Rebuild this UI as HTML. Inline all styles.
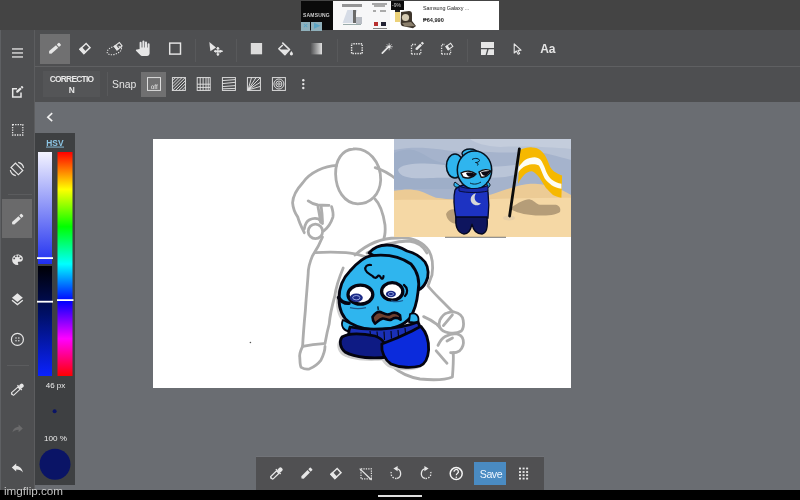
<!DOCTYPE html>
<html><head><meta charset="utf-8">
<style>
*{margin:0;padding:0;box-sizing:border-box}
html,body{width:800px;height:500px;overflow:hidden;background:#6a6d72;font-family:"Liberation Sans",sans-serif}
.a{position:absolute;will-change:transform}
svg{will-change:transform}
#top{left:0;top:0;width:800px;height:30px;background:#444}
#tb1{left:35px;top:30px;width:765px;height:36px;background:#4e4f51}
#tbline{left:35px;top:66px;width:765px;height:1px;background:#5f6062}
#tb2{left:35px;top:67px;width:765px;height:34.5px;background:#4e4f51}
#side{left:0;top:30px;width:34px;height:460px;background:#4e4f51}
#sideb{left:34px;top:30px;width:1px;height:460px;background:#5c5d5f}
#blk{left:0;top:490px;width:800px;height:10px;background:#000}
.sep{position:absolute;width:1px;background:#58595b}
.hl{position:absolute;background:#707071}
svg{position:absolute;overflow:visible}
.w{fill:#e6e6e6}
.ws{fill:none;stroke:#e6e6e6}
</style></head><body>
<div class="a" id="top"></div>
<div class="a" id="tb1"></div>
<div class="a" id="tbline"></div>
<div class="a" id="tb2"></div>
<div class="a" id="side"></div>
<div class="a" id="sideb"></div>
<div class="a" style="left:0;top:30px;width:1px;height:460px;background:#5e6063"></div>

<!-- ad -->
<div class="a" style="left:301px;top:1px;width:32px;height:29px;background:#0a0a0a"></div>
<div class="a" style="left:303px;top:12px;width:28px;font:bold 5px 'Liberation Sans';color:#ccc;letter-spacing:0.2px">SAMSUNG</div>
<div class="a" style="left:301px;top:21.5px;width:9px;height:8.5px;background:#8fb0bb;color:#5aa5c5;font:bold 8px/8.5px 'Liberation Sans';text-align:center">&#215;</div>
<div class="a" style="left:311px;top:21.5px;width:11px;height:8.5px;background:#8fb0bb"></div><svg width="800" height="40" style="left:0;top:0"><path d="M314,22.8 L320.5,25.8 L314,28.8Z" fill="#5aa5c5"/></svg>
<div class="a" style="left:333px;top:1px;width:166px;height:29px;background:#fff"></div>
<div class="a" style="left:333px;top:1px;width:57px;height:29px;background:#f7f7f8"></div>
<div class="a" style="left:341.5px;top:4.4px;width:20px;height:2.6px;background:#444;opacity:0.55"></div>
<div class="a" style="left:345px;top:10px;width:10px;height:13px;background:#d5dbe6;transform:skewX(-20deg)"></div>
<div class="a" style="left:352.5px;top:10px;width:3px;height:13px;background:#6a6a6a"></div>
<div class="a" style="left:356px;top:17px;width:6px;height:7px;background:#b8bcc4"></div>
<div class="a" style="left:343px;top:24px;width:18px;height:1.2px;background:#9aa"></div>
<div class="a" style="left:372px;top:2.5px;width:15px;height:1.6px;background:#555;opacity:0.5"></div>
<div class="a" style="left:374px;top:5px;width:11px;height:1.5px;background:#777;opacity:0.6"></div>
<div class="a" style="left:373px;top:10px;width:3px;height:2px;background:#777;opacity:0.6"></div>
<div class="a" style="left:380px;top:10px;width:6px;height:2px;background:#777;opacity:0.6"></div>
<div class="a" style="left:373.7px;top:21.9px;width:4.3px;height:3.5px;background:#b83030"></div>
<div class="a" style="left:380.7px;top:21.9px;width:5px;height:3.5px;background:#223"></div>
<div class="a" style="left:373px;top:28px;width:14px;height:1px;background:#333;opacity:0.6"></div>
<div class="a" style="left:391px;top:1px;width:13px;height:9.3px;background:#0c0c0c"></div>
<div class="a" style="left:392.3px;top:2.2px;font:5px 'Liberation Sans';color:#ccc">-9%</div>
<div class="a" style="left:395.3px;top:10.3px;width:5.1px;height:12px;background:#ecd27a"></div>
<div class="a" style="left:395.3px;top:10.3px;width:5.1px;height:2.4px;background:#222"></div>
<svg width="800" height="40" style="left:0;top:0">
 <path d="M401,12 L409,11 C411,11 412,12 412,14 L412,21 L416,26 L413,28.2 L402,26 C401,25 400.7,24 400.7,23 Z" fill="#3d352b"/>
 <circle cx="405.5" cy="17.5" r="3.6" fill="#d6ccb4"/>
 <path d="M402,23 L411,22 L415,26 L405,26.5Z" fill="#8a7f6c"/>
</svg>
<div class="a" style="left:423.3px;top:4.8px;font:5.4px 'Liberation Sans';color:#222;white-space:nowrap;letter-spacing:-0.05px">Samsung Galaxy ...</div>
<div class="a" style="left:423.3px;top:17.4px;font:bold 5.6px 'Liberation Sans';color:#1a1a1a;white-space:nowrap;letter-spacing:0px">&#8369;64,990</div>

<!-- toolbar 1 -->
<div class="hl" style="left:40px;top:34px;width:30px;height:30px"></div>
<div class="sep" style="left:195px;top:39px;height:23px"></div>
<div class="sep" style="left:236px;top:39px;height:23px"></div>
<div class="sep" style="left:337px;top:39px;height:23px"></div>
<div class="sep" style="left:467px;top:39px;height:23px"></div>

<!-- toolbar 2 -->
<div class="a" style="left:43px;top:71.2px;width:57px;height:26.4px;background:#545557"></div>
<div class="a" style="left:42.6px;top:73.6px;width:57px;text-align:center;font:bold 8.4px/11px 'Liberation Sans';letter-spacing:-0.75px;color:#e8e8e8">CORRECTIO<br>N</div>
<div class="sep" style="left:107px;top:72px;height:24px"></div>
<div class="a" style="left:112.4px;top:79px;font:10.4px 'Liberation Sans';color:#e4e4e4">Snap</div>
<div class="hl" style="left:141px;top:72px;width:25px;height:25px"></div>
<div class="hl" style="left:2px;top:199px;width:30px;height:39px;background:#6a6a6b"></div>
<div class="sep" style="left:8px;top:194px;height:1px;width:24px;background:#5b5c5e"></div>
<div class="sep" style="left:7px;top:365px;height:1px;width:22px;background:#5b5c5e"></div>

<!-- color panel -->
<div class="a" style="left:35px;top:133px;width:40px;height:352px;background:#3e4042"></div>

<!-- canvas -->
<div class="a" style="left:153px;top:139px;width:418px;height:249px;background:#fff"></div>

<!-- bottom toolbar -->
<div class="a" style="left:256px;top:455.8px;width:288px;height:1.5px;background:#717378"></div>
<div class="a" style="left:256px;top:457.3px;width:288px;height:32.7px;background:#505052"></div>
<div class="a" style="left:474px;top:462px;width:32.2px;height:22.7px;background:#4a8bc2"></div>
<div class="a" style="left:474.5px;top:468px;width:32px;text-align:center;font:10.6px 'Liberation Sans';letter-spacing:-0.45px;color:#eef6ff">Save</div>


<svg width="800" height="500" style="left:0;top:0;z-index:5" viewBox="0 0 800 500">
<defs>
 <g id="pen"><path d="M-7.3,0 L-5.8,-1.7 H3.3 V1.7 H-5.8Z"/><rect x="4.3" y="-1.7" width="3" height="3.4" rx="0.7"/></g>
 <g id="eras"><rect x="-4.2" y="-2.85" width="8.4" height="5.7" fill="none" stroke="#e6e6e6" stroke-width="1.5"/><rect x="-4.95" y="-3.6" width="3.6" height="7.2"/></g>
</defs>
<g fill="#e6e6e6">
 <!-- toolbar1 -->
 <use href="#pen" transform="translate(54.6,48.6) rotate(-41)"/>
 <use href="#eras" transform="translate(85,48.4) rotate(-43)"/>
 <g transform="translate(118.2,46.2) rotate(-38) scale(0.76)"><use href="#eras"/></g>
 <ellipse cx="114.3" cy="50.4" rx="7.4" ry="3.9" transform="rotate(-18 114.3 50.4)" fill="none" stroke="#e6e6e6" stroke-width="1.1" stroke-dasharray="1.2 1.3"/>
 <!-- hand -->
 <path d="M139.6,49 V42.8 a1,1 0 0 1 2,0 V47.5 H142.4 V41.6 a1,1 0 0 1 2,0 V47.5 H145 V42.4 a1,1 0 0 1 2,0 V47.5 H147.6 V44.3 a1,1 0 0 1 2,0 V53.5 a2.4,2.4 0 0 1 -2.4,2.4 H142 a2,2 0 0 1 -1.5,-0.7 L136,50.8 a0.9,0.9 0 0 1 1.1,-1.3 Z"/>
 <rect x="169.7" y="43.1" width="10.8" height="11" fill="none" stroke="#e6e6e6" stroke-width="1.45"/>
 <!-- move -->
 <path d="M209.3,42 L216,47.6 L210.4,51.2 Z"/>
 <path d="M217.9,47.3 V55.5 M214.2,51.3 H222.6" stroke="#e6e6e6" stroke-width="1.4" fill="none"/>
 <path d="M216,48.9 L217.9,46.8 L219.8,48.9 Z M216,53.7 L217.9,55.9 L219.8,53.7 Z M216.3,49.4 L214,51.3 L216.3,53.2 Z M219.5,49.4 L222.8,51.3 L219.5,53.2 Z"/>
 <rect x="250.8" y="43" width="11.3" height="11.3" fill="#dcdcdc"/>
 <!-- bucket -->
 <path d="M282.3,42.6 L289.6,49.6 L284.9,54.8 L278.8,48.8 L282.8,45" fill="none" stroke="#e6e6e6" stroke-width="1.5" stroke-linejoin="round"/>
 <path d="M279.4,49.6 H289 L284.9,54.4 Z"/>
 <path d="M291.4,51 q1.6,2 1.6,2.8 a1.6,1.6 0 0 1 -3.2,0 q0,-0.8 1.6,-2.8z"/>
 <defs><linearGradient id="gr" x1="0" x2="1"><stop offset="0" stop-color="#4e4f51"/><stop offset="1" stop-color="#e0e0e0"/></linearGradient></defs>
 <rect x="310.4" y="43" width="11.6" height="11.4" fill="url(#gr)"/>
 <!-- dotted square -->
 <rect x="351.6" y="43.75" width="10.6" height="9.8" fill="none" stroke="#e6e6e6" stroke-width="1.45" stroke-dasharray="1.4 1.05" stroke-dashoffset="0.7"/>
 <!-- wand -->
 <path d="M382.3,53.2 L388.2,47.2" stroke="#e6e6e6" stroke-width="1.7" stroke-linecap="round"/>
 <path d="M389.2,43.2 V50.3 M385.7,46.75 H392.8 M386.8,44.3 L391.6,49.2 M391.6,44.3 L386.8,49.2" stroke="#e6e6e6" stroke-width="0.7"/><circle cx="389.2" cy="46.75" r="1.2" fill="#f0f0f0"/>
 <!-- select pen -->
 <path d="M411.5,54 H420.8 V48.5 M411.5,54 V44.5 H416" fill="none" stroke="#e6e6e6" stroke-width="1.3" stroke-dasharray="1.3 1.2"/>
 <use href="#pen" transform="translate(419.4,46.2) rotate(-44) scale(0.72,0.75)"/>
 <!-- select eraser -->
 <path d="M441.6,54 H450.6 V49.8 M441.6,54 V44.5 H445" fill="none" stroke="#e6e6e6" stroke-width="1.3" stroke-dasharray="1.3 1.2"/>
 <use href="#eras" transform="translate(449.4,46.5) rotate(-35) scale(0.68)"/>
 <!-- panel -->
 <rect x="481" y="42" width="13" height="6" />
 <path d="M481,49.2 H487.2 L485.6,55 H481 Z M488.6,49.2 H494 V55 H487 Z"/>
 <!-- cursor -->
 <path d="M514.2,43.8 L514.2,53 L516.4,51 L518.2,54.2 L519.6,53.4 L518,50.4 L521,50.2 Z" fill="none" stroke="#e6e6e6" stroke-width="1.1" stroke-linejoin="round"/>
</g>

<g fill="none" stroke="#e2e2e2" stroke-width="0.95">
 <rect x="147.5" y="77.6" width="13" height="12.8"/>
 <rect x="172.4" y="77.6" width="13" height="12.8"/>
 <path d="M172.4,80.8 L175.6,77.6 M172.4,84 L178.8,77.6 M172.4,87.2 L182,77.6 M172.4,90.4 L185.2,77.6 M175.6,90.4 L185.4,80.6 M178.8,90.4 L185.4,83.8 M182,90.4 L185.4,87"/>
 <rect x="197.2" y="77.6" width="13" height="12.8"/>
 <path d="M200.2,77.6 V90.4 M203.1,77.6 V90.4 M206,77.6 V90.4 M208.2,77.6 V90.4 M197.2,84.2 H210.2 M197.2,87.4 H210.2"/>
 <rect x="222.4" y="77.6" width="13" height="12.8"/>
 <path d="M222.4,80.6 L235.4,79.6 M222.4,83.6 L235.4,82.3 M222.4,86.6 L235.4,85.6 M222.4,88.8 L235.4,88.4"/>
 <rect x="247.4" y="77.6" width="13" height="12.8"/>
 <path d="M248,90 L260,78 M248,90 L256,77.6 M248,90 L251.5,77.6 M248,90 L260,82.5 M248,90 L260,86.5"/>
 <rect x="272.4" y="77.6" width="13" height="12.8"/>
 <circle cx="278.9" cy="84" r="5"/><circle cx="278.9" cy="84" r="3"/><circle cx="278.9" cy="84" r="1.2"/>
</g>
<text x="154.3" y="89.2" font-family="Liberation Sans" font-size="6.4" fill="#eeeeee" text-anchor="middle" style="text-rendering:geometricPrecision">off</text>
<g fill="#e6e6e6"><circle cx="303.3" cy="80.3" r="1.2"/><circle cx="303.3" cy="84.1" r="1.2"/><circle cx="303.3" cy="88" r="1.2"/></g>

<g fill="#e6e6e6">
 <rect x="12" y="48.3" width="11" height="1.3"/><rect x="12" y="52.3" width="11" height="1.3"/><rect x="12" y="56.3" width="11" height="1.3"/>
 <path d="M17,88.7 H12.7 V97 H21 V92.5" fill="none" stroke="#e6e6e6" stroke-width="1.5"/>
 <use href="#pen" transform="translate(19.5,89.6) rotate(-43) scale(0.6,0.7)"/>
 <rect x="12.6" y="124.6" width="10.2" height="10.4" fill="none" stroke="#e6e6e6" stroke-width="1.3" stroke-dasharray="1.4 1.1"/>
 <g transform="translate(16.9,168.9) rotate(45)"><rect x="-5.2" y="-3.1" width="10.4" height="6.2" fill="none" stroke="#e6e6e6" stroke-width="1.2"/></g>
 <path d="M18.2,162.3 A6.9,6.9 0 0 1 23.6,167.8 M15.8,175.6 A6.9,6.9 0 0 1 10.3,170.2" fill="none" stroke="#e6e6e6" stroke-width="1.2"/>
 <use href="#pen" transform="translate(17.3,219.5) rotate(-42) scale(0.95,1)"/>
 <path d="M17.4,254.5 a5.3,5.3 0 0 0 0,10.6 c0.6,0 1,-0.4 1,-1 0,-0.3 -0.1,-0.5 -0.3,-0.7 -0.2,-0.2 -0.3,-0.4 -0.3,-0.7 0,-0.5 0.4,-1 1,-1 h1.1 c1.6,0 3,-1.3 3,-3 0,-2.4 -2.4,-4.2 -5.5,-4.2z"/>
 <g fill="#4e4f51"><circle cx="14.2" cy="258.4" r="0.95"/><circle cx="15.9" cy="256.2" r="0.95"/><circle cx="18.6" cy="256.2" r="0.95"/><circle cx="20.6" cy="258.4" r="0.95"/></g>
 <path d="M17.4,293.2 L22.8,297.7 L17.4,302 L12,297.7 Z"/>
 <path d="M12,300.3 L17.4,304.6 L22.8,300.3" fill="none" stroke="#e6e6e6" stroke-width="1.3"/>
 <circle cx="17.4" cy="339.4" r="6" fill="none" stroke="#e6e6e6" stroke-width="1.2"/>
 <circle cx="16" cy="338" r="0.75"/><circle cx="18.8" cy="338" r="0.75"/><circle cx="16" cy="340.8" r="0.75"/><circle cx="18.8" cy="340.8" r="0.75"/>
 <g transform="translate(17.5,389.5) rotate(-42)">
  <rect x="-7" y="-1.6" width="9" height="3.2" rx="0.5" fill="none" stroke="#e6e6e6" stroke-width="1.1"/>
  <path d="M-7,-1.6 L-8.2,0 L-7,1.6Z"/>
  <rect x="2.2" y="-3.2" width="1.3" height="6.4"/>
  <rect x="3.2" y="-2" width="4.4" height="4" rx="1.6"/>
 </g>
 <path d="M22.8,428.4 L18.6,424.6 V426.8 C14.6,427.3 13,429.8 12.4,432.4 C13.8,430.6 15.6,429.8 18.6,429.8 V432.2Z" fill="#6b6b6c"/>
 <path d="M11.8,467.4 L16.2,463.4 V465.7 C20.2,466.2 22.2,469 23,472.6 C21.6,470.6 19.6,469.5 16.2,469.5 V471.5Z"/>
</g>

<defs>
 <linearGradient id="sv" x1="0" y1="0" x2="0" y2="1"><stop offset="0" stop-color="#f4f4ff"/><stop offset="1" stop-color="#1f2ff0"/></linearGradient>
 <linearGradient id="vv" x1="0" y1="0" x2="0" y2="1"><stop offset="0" stop-color="#000005"/><stop offset="0.45" stop-color="#00106a"/><stop offset="1" stop-color="#0a22ff"/></linearGradient>
 <linearGradient id="hue" x1="0" y1="0" x2="0" y2="1">
  <stop offset="0" stop-color="#ff0000"/><stop offset="0.1667" stop-color="#ffff00"/><stop offset="0.3333" stop-color="#00ff00"/><stop offset="0.5" stop-color="#00ffff"/><stop offset="0.6667" stop-color="#0000ff"/><stop offset="0.8333" stop-color="#ff00ff"/><stop offset="1" stop-color="#ff0000"/>
 </linearGradient>
</defs>
<rect x="38" y="152" width="14" height="112" fill="url(#sv)"/>
<rect x="38" y="266" width="14" height="110" fill="url(#vv)"/>
<rect x="57.5" y="152" width="15" height="224" fill="url(#hue)"/>
<rect x="37" y="257.2" width="16" height="1.8" fill="#fff"/>
<rect x="37" y="300.8" width="16" height="1.8" fill="#fff"/>
<rect x="57" y="299.2" width="16.5" height="1.8" fill="#fff"/>
<circle cx="54.6" cy="411.3" r="2" fill="#0a1466"/>
<circle cx="55" cy="464.3" r="15.5" fill="#0a1466"/>
<text x="46.3" y="145.6" font-family="Liberation Sans" font-weight="bold" font-size="8.8" fill="#8cc6e6" textLength="17.2" lengthAdjust="spacingAndGlyphs">HSV</text>
<rect x="46" y="146.6" width="18" height="0.9" fill="#8cc6e6"/>
<text x="55.5" y="388.4" font-family="Liberation Sans" font-size="8" fill="#ececec" text-anchor="middle">46 px</text>
<text x="55.5" y="441.4" font-family="Liberation Sans" font-size="8.1" fill="#ececec" text-anchor="middle">100 %</text>
<path d="M52.2,113.2 L47.8,117.2 L52.2,121.2" fill="none" stroke="#f0f0f0" stroke-width="1.6"/>

<g fill="#e6e6e6">
 <g transform="translate(276.3,473.5) rotate(-44)">
  <rect x="-6.6" y="-1.7" width="8.6" height="3.4" rx="0.6" fill="none" stroke="#e6e6e6" stroke-width="1.2"/>
  <path d="M-6.6,-1.7 L-8,0 L-6.6,1.7Z"/>
  <rect x="2" y="-3.4" width="1.4" height="6.8"/>
  <rect x="3.2" y="-2.1" width="4.6" height="4.2" rx="1.6"/>
 </g>
 <use href="#pen" transform="translate(306.5,473.5) rotate(-45) scale(0.97,1)"/>
 <use href="#eras" transform="translate(336,473.5) rotate(-43)"/>
 <rect x="361" y="468.8" width="10.4" height="10" fill="none" stroke="#e6e6e6" stroke-width="1.2" stroke-dasharray="1.3 1.1"/>
 <path d="M359.7,468.6 L371.6,480" stroke="#e6e6e6" stroke-width="1.3"/>
 <path d="M396,468.6 A5,5 0 0 1 397,478.4" fill="none" stroke="#e6e6e6" stroke-width="1.3"/><path d="M396.5,478.5 A5,5 0 0 1 391.3,472" fill="none" stroke="#e6e6e6" stroke-width="1.3" stroke-dasharray="1.5 1.3"/>
 <path d="M397.6,466 L393.4,468.6 L397.6,471.2Z"/>
 <path d="M426,468.6 A5,5 0 0 0 425,478.4" fill="none" stroke="#e6e6e6" stroke-width="1.3"/><path d="M425.5,478.5 A5,5 0 0 0 430.7,472" fill="none" stroke="#e6e6e6" stroke-width="1.3" stroke-dasharray="1.5 1.3"/>
 <path d="M424.4,466 L428.6,468.6 L424.4,471.2Z"/>
 <circle cx="456.2" cy="473.6" r="6" fill="none" stroke="#f4f4f4" stroke-width="1.5"/>
 <path d="M454,471.8 a2.2,2.2 0 1 1 3.4,1.7 c-0.8,0.5 -1.1,0.9 -1.1,1.8" fill="none" stroke="#f4f4f4" stroke-width="1.3"/>
 <circle cx="456.3" cy="477.3" r="0.8" fill="#f4f4f4"/>
</g>
<g fill="#e8e8e8">
 <rect x="519" y="467.6" width="2" height="1.8"/><rect x="522.6" y="467.6" width="2" height="1.8"/><rect x="526.1" y="467.6" width="2" height="1.8"/>
 <rect x="519" y="471.1" width="2" height="1.8"/><rect x="522.6" y="471.1" width="2" height="1.8"/><rect x="526.1" y="471.1" width="2" height="1.8"/>
 <rect x="519" y="474.3" width="2" height="1.8"/><rect x="522.6" y="474.3" width="2" height="1.8"/><rect x="526.1" y="474.3" width="2" height="1.8"/>
 <rect x="519" y="477.7" width="2" height="1.8"/><rect x="522.6" y="477.7" width="2" height="1.8"/><rect x="526.1" y="477.7" width="2" height="1.8"/>
</g>
<text x="540.2" y="53.1" font-family="Liberation Sans" font-weight="bold" font-size="12" fill="#e6e6e6">Aa</text>
</svg>


<svg width="800" height="500" style="left:0;top:0;z-index:3" viewBox="0 0 800 500">
<defs><clipPath id="cv"><rect x="153" y="139" width="418" height="249"/></clipPath></defs>
<g clip-path="url(#cv)">
<!-- gray sketch -->
<g fill="none" stroke="#adadad" stroke-width="2.8" stroke-linecap="round" stroke-linejoin="round">
 <path d="M353,149 C368,147 381,162 380.7,180 C380,195 370,204 357.6,203.9 C344,203 336,190 335.6,174 C335.5,160 342,150 353,149 Z"/>
 <path d="M336.7,165.4 C325,166 310,172 302.6,183 C297,189 293,195 292.6,202.8 C293,208 295,213 297.8,217.1 C299,222 301,226 304.3,232.7"/>
 <path d="M375.2,167.6 C383,170 390,174 396,179"/>
 <path d="M375,199 C380,204 383,212 385,225 C385.5,231 385,235 384,238"/>
 <circle cx="315.4" cy="231.4" r="7.2"/>
 <path d="M308.2,200.9 C311,203 314,204.5 318,205 C322,205.4 326,205.4 329,205.4"/>
 <path d="M318,206.7 C319,212 320,217 320.6,222.3 M321.2,206.7 C322,212 322.3,217 322.5,222"/>
 <path d="M331.6,206.7 C333,211 333.5,214 332.9,217.1 C331,223 329,227 323.8,230.8"/>
 <path d="M304.3,228.8 C305,224 307,221 309.5,219.7 C313,218 316,218 318.6,219 C320,220 321,222 322.5,223.6"/>
 <path d="M322.5,237 C319,246 315,252 312.4,256 C309,264 308.2,270 308.2,273.6 C307,290 306,300 305.4,310 C304,325 303,338 302.6,346.4 C301,350 299,353 299.8,357.6 C300,362 300,366 301.2,367.4 C304,369 307,369.5 309.6,368.8 C314,367 318,364 320.8,360.4 C323,356 325,350 325,346.4"/>
 <path d="M302.6,346.4 C309,345 316,344 323.6,343.6"/>
 <path d="M315.2,252.6 C325,252 336,252 346,252.6 C353,253 360,255 365.6,256.8"/>
 <path d="M343.2,268 C339,278 336,287 334.8,296 C332,306 330,315 329.2,324 C327,332 326,338 325,343.6"/>
 <path d="M355,255 C365,246 380,238 397,238 C410,237 422,240 429,251 C433,258 433,268 432,275 C430,280 429,283 428,286 C432,291 436,295 440,299 C445,304 449,308 452.4,311.5"/>
 <path d="M367,253 C380,246 395,241 409,241 C418,242 424,247 427,253"/>
 <path d="M439.8,320.2 C442,316 444.5,313.5 447,313 C450,312 452,311.8 454.2,312 C459,313 462.5,316 463.2,320.2 C464,325 463,329 461.4,331 C458,333 453,333.5 448.8,332.8 C444,332 441,330 439.8,327.4 C439,325 439,322 439.8,320.2Z"/>
 <path d="M443.4,325.6 L452.4,314.8"/>
 <path d="M438,345.4 C440,341 442,338 445.2,336.4 C449,334.5 452.5,333.7 456,333.7 C460,334.5 462.5,337 463.2,340 C464,344 462,348.5 459.6,350.8 C457,352.5 453.5,353 450.6,352.6"/>
 <path d="M447,341 L452.5,338"/>
 <path d="M436.2,350.8 C439,354 443,359 447,363.3"/>
 <path d="M393,366.6 C400,373 411,377.4 420,379 C430,380 445,380 452.4,377 C453,370 453.5,360 453.3,352.6"/>
 <path d="M423.6,316.6 C428,318.5 432,320.5 436.2,323.8 C437.5,325 438.8,326 439.8,327.4"/>
</g>
<circle cx="250.4" cy="342.5" r="0.8" fill="#555"/>

<!-- inset -->
<g>
 <rect x="394" y="139" width="177" height="98" fill="#a5b3cc"/>
 <path d="M394,139 H571 V160 C555,156 540,150 520,152 C500,154 480,150 460,152 C440,150 420,145 394,150Z" fill="#b7c2d5"/>
 <path d="M470,139 H571 V149 C550,147 520,146 500,147 C485,146 475,143 470,139Z" fill="#c4cddc"/>
 <path d="M394,153 C400,150 405,149.5 410,149.5 C416,150 422,153 428,157 C436,162 446,164 460,166 L460,189 L394,189Z" fill="#9eaec8"/>
 <path d="M398,170 C400,165 410,163.5 425,163.5 C440,164 455,167 470,166 C480,166 500,168 520,164 C525,170 520,175 505,177 C480,179 450,177 430,178 C412,179 400,178 398,170Z" fill="#bac5d8"/>
 <path d="M394,190.8 C400,190 404,189.4 408,189.4 C412,189.4 416,190 419,190.8 C426,193 431,196 436,197.8 C445,199 455,200 470,199 C485,198 500,191 511,188 C520,185 528,183.8 532,183.8 C540,184 548,185 553,186.6 C560,189 566,192 571,195 L571,237 L394,237Z" fill="#eccb95"/>
 <path d="M394,200 C420,199.5 450,200.5 480,199.5 C510,198.5 540,197.5 571,197.8 L571,237 L394,237Z" fill="#f5d8a5"/>
 <path d="M512,207 C518,203 524,199.2 529.2,199.2 C534,200 536,204 540,204.8 C546,205 551,204.5 556,204.8 C560,206 561,209 560,212 C556,215 548,215.5 540,215.5 C528,215.5 518,213 512,210Z" fill="#b59d78"/>
 <ellipse cx="509" cy="218" rx="6" ry="2.5" fill="#e7cfa7"/>
 <!-- flag -->
 <path d="M520,150.2 C524,148 528,147.2 532,147.4 C536,147.6 538.5,148.6 540.4,150.2 C543,152.5 545,155 546,157.2 C548,161 549,164 550.2,167 C552,170 554,171.6 555.8,172.6 C558,174 560,175 562.1,175.4 L561.4,197.8 C558,197 555,196 553,195 C550,192 548,190 546,188 C543,183 540,178 537.6,175.4 C535,173 533.5,171.6 532,171.2 C529,171 527,172.5 525,174 C522,177 520,180 518,183.8Z" fill="#f6b800"/>
 <path d="M518.7,167 C521,164 523,161.5 525,160 C528,158 531.5,157.2 534.8,157.2 C538,157.5 540.5,159 541.8,161.4 C543.5,164.5 545,168 546,171.2 C547.5,174.5 549.5,177.5 551.6,179.6 C554.5,182 558,183.4 561.4,183.8 L561.4,188.7 C558,188 554.5,187 551.6,185.2 C549,183 546.5,181 544.6,178.2 C542.5,174.5 541,169 539,165.6 C537,164.5 534.5,164 532,164.2 C529,164.5 526,165.5 523.6,167 C521.5,168.5 519.5,170.5 518,172.6Z" fill="#fdfdf5"/>
 <path d="M519.4,148.8 L509.6,216" stroke="#0a0a0a" stroke-width="2.8" stroke-linecap="round"/>
 <!-- char -->
 <path d="M446,214 C448,209 454,208 460,211 L461,222 C455,226 447,222 446,214Z" fill="#b89f78"/>
 <path d="M455,190 C458,185 465,184 475,184 C482,184 487,186 488,192 C489,200 489,210 488,218 L456,218 C454,208 453,198 455,190Z" fill="#1d33c2" stroke="#060a2a" stroke-width="1.3"/>
 <path d="M456,217 C455,225 457,233 464,234 C469,234 471,229 472,224 C473,229 476,234 482,234 C487,233 488,226 487,217Z" fill="#0e155e" stroke="#050820" stroke-width="1.3"/>
 <ellipse cx="455" cy="166" rx="8.6" ry="12" fill="#2fb5ee" stroke="#07121e" stroke-width="1.5"/>
 <ellipse cx="470" cy="153.5" rx="8" ry="4.5" fill="#2fb5ee" stroke="#07121e" stroke-width="1.4"/>
 <ellipse cx="474.5" cy="170" rx="17.2" ry="19" fill="#2fb5ee" stroke="#07121e" stroke-width="1.5"/>
 <g transform="translate(0,2)"><path d="M472,157.5 C475,155.5 479.5,156.5 479.5,158.5 C479,160 477,160.5 475.5,160.5 C478,161 479,162.5 477,163.5" fill="none" stroke="#07121e" stroke-width="1"/></g>
 <path d="M455,182 C452,186 456,189 460,186Z M487,182 C491,183 491,187 487,188Z" fill="#2fb5ee" stroke="#07121e" stroke-width="1"/>
 <g transform="translate(0,2)"><path d="M461,171 C466,168 472,169 476,172 C473,176 467,177 463,175Z" fill="#fff" stroke="#111" stroke-width="1.4"/></g>
 <g transform="translate(0,2)"><path d="M479,170 C483,167 488,167 491,169 C489,173 485,176 481,175Z" fill="#fff" stroke="#111" stroke-width="1.4"/></g>
 <g transform="translate(0,2)"><path d="M466,171 C469,170 473,171 476,172 L472,175 C469,175 467,174 466,171Z M481,170 C485,169 488,169 491,169 L486,174 C484,174 482,173 481,170Z" fill="#0a0a14"/></g>
 <g transform="translate(0,2)"><path d="M470,181 C474,183 478,182 481,180" stroke="#07121e" stroke-width="0.9" fill="none"/></g>
 <path d="M476,193.3 C469.5,194.5 468.5,203.5 475.5,205.2 C478,205.7 480,204.6 481,203.2 C475.5,203.5 472.8,198 476,193.3Z" fill="#d8d8d8"/>
 <path d="M459,186 C466,189.5 480,189.5 488,185.5 L488,191 C480,193 466,193 459,191Z" fill="#1a2ba8" stroke="#060a2a" stroke-width="0.9"/>
</g>
<line x1="445" y1="237.3" x2="506" y2="237.3" stroke="#555" stroke-width="0.8"/>

<!-- blue character -->
<g fill="#cfcfcf" transform="translate(-3,3)">
 <path d="M371.4,255.6 C385,254 400,256 411,264 C418,272 420,282 418,292 C417,302 415,310 410,318 C404,325 395,329 380,329.7 C368,330 357,327 350,323 C343,318 339,310 339,299 C339,288 343,278 350,271 C356,264 363,257 371.4,255.6Z"/>
 <path d="M342,337 C350,332 365,334 375,336 C384,339 388,347 387,357 C375,359 355,358 345,352 C340,348 339,341 342,337Z"/>
 <path d="M381.8,344 C390,341 400,337 410,332 C415,329.5 418,327.5 421,326.5 C426,332 429,341 428.6,350 C428,358 425,364 420,366 C412,368 400,368 391,364 C385,360 381,352 381.8,344Z"/>
</g>
<g stroke="#040410" stroke-width="2.8" stroke-linejoin="round">
 <path d="M369,253 C374,247 380,245 387,245 C395,245 402,248 407,251 C415,253 421,257 425,262 C429,268 429,276 426,282 C424,286 421,289 418,290 L400,270Z" fill="#2fb5ee"/>
 <path d="M371.4,255.6 C385,254 400,256 411,264 C418,272 420,282 418,292 C417,302 415,310 410,318 C404,325 395,329 380,329.7 C368,330 357,327 350,323 C343,318 339,310 339,299 C339,288 343,278 350,271 C356,264 363,257 371.4,255.6Z" fill="#2fb5ee"/>
 <path d="M343,320 C340,326 344,332 351,331 L357,327Z" fill="#2fb5ee" stroke-width="1.8"/>
 <path d="M410,314 C416,312 420,316 418,323 L409,322Z" fill="#2fb5ee" stroke-width="1.8"/>
 <path d="M350,327 C365,330 395,331 418,322 C421,328 422,334 421,340 C400,344 375,346 352,342 C348,337 348,332 350,327Z" fill="#1a30b8"/>
 <path d="M342,337 C350,332 365,334 375,336 C384,339 388,347 387,357 C375,359 355,358 345,352 C340,348 339,341 342,337Z" fill="#0e1b84"/>
 <path d="M381.8,344 C390,341 400,337 410,332 C415,329.5 418,327.5 421,326.5 C426,332 429,341 428.6,350 C428,358 425,364 420,366 C412,368 400,368 391,364 C385,360 381,352 381.8,344Z" fill="#0b2bdc"/>
 <ellipse cx="360.4" cy="294.6" rx="12.4" ry="9.5" fill="#fff" stroke-width="3.3"/>
 <ellipse cx="392.2" cy="291.4" rx="10.6" ry="8.8" fill="#fff" stroke-width="3.3"/>
 <path d="M372.5,317 C375.5,312.5 379,311 382,312.6 C385,314.2 387,315.5 390,314 C393,312 396.5,312 400,315.2 L400.6,319.6 C397.5,317.5 394.5,317.2 391.5,319.5 C388.5,321.2 385.5,318.2 382.5,318.6 C379.5,319 377.5,322 375,323.6 C373.5,322 372.5,319.5 372.5,317Z" fill="#6e3f2e" stroke-width="2.6"/>
</g>
<g fill="none" stroke="#040410" stroke-width="1.1">
 <path d="M370,331 L370.5,335 M377,331.5 L377.5,336.5 M384,331.5 L384.5,340 M391,331 L391.5,338.5 M398,330 L398.5,336.5 M405,328 L405.5,333.5"/>
</g>
<g stroke="#040410" stroke-width="2.2" fill="none" stroke-linecap="round">
 <path d="M371,265 C367,264 364.5,267 365.5,270 C366.5,273 370,274 372.5,276 C374,278 376,278.5 377.5,276.5 C378.5,275 380,275.5 381,278 C382,279.5 383.5,278.5 383.5,276"/>
 <path d="M338.6,297.5 C341,301.5 345,303.5 349,303.2" stroke-width="3.6"/>
 <path d="M404,285 C408,288 408,293 405,296"/>
</g>
<ellipse cx="356.3" cy="297.7" rx="6.5" ry="4.3" fill="#1b2a86"/>
<ellipse cx="356.3" cy="297.7" rx="3.6" ry="2.2" fill="none" stroke="#9fb0ea" stroke-width="0.9"/>
<ellipse cx="390.9" cy="294" rx="5" ry="3.3" fill="#1b2a86"/>
<ellipse cx="390.9" cy="294" rx="2.6" ry="1.6" fill="none" stroke="#9fb0ea" stroke-width="0.8"/>
<path d="M350,307.6 C355,309 361,309 366,307.6 M391,301 C395,302 399,302 403,300.5" stroke="#1a5a90" stroke-width="1.3" fill="none"/>
<path d="M377.8,306.3 L378.4,310" stroke="#0a2a40" stroke-width="1.6"/>
</g>
</svg>

<div class="a" id="blk"></div>
<div class="a" style="left:378px;top:495px;width:44px;height:2px;background:#ddd"></div>
<div class="a" style="left:4.4px;top:484.4px;font:11.7px 'Liberation Sans';color:rgba(215,215,215,0.9);will-change:transform">imgflip.com</div>
</body></html>
